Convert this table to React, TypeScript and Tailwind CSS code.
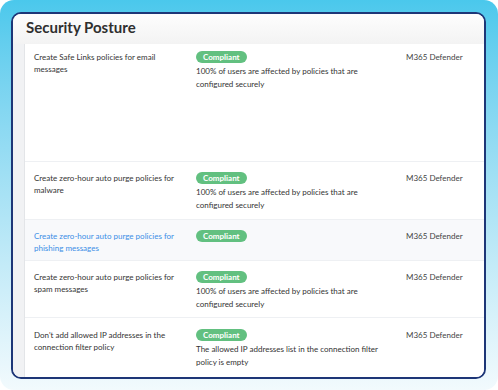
import React from 'react';

interface PostureRow {
  title: string;
  detail?: string;
  source: string;
  height: string;
  pad: string;
  active?: boolean;
}

const rows: PostureRow[] = [
  {
    title: 'Create Safe Links policies for email messages',
    detail: '100% of users are affected by policies that are configured securely',
    source: 'M365 Defender',
    height: 'h-[118px]',
    pad: 'pt-[7px]',
  },
  {
    title: 'Create zero-hour auto purge policies for malware',
    detail: '100% of users are affected by policies that are configured securely',
    source: 'M365 Defender',
    height: 'h-[58px]',
    pad: 'pt-[10px]',
  },
  {
    title: 'Create zero-hour auto purge policies for phishing messages',
    source: 'M365 Defender',
    height: 'h-[41px]',
    pad: 'pt-[10px]',
    active: true,
  },
  {
    title: 'Create zero-hour auto purge policies for spam messages',
    detail: '100% of users are affected by policies that are configured securely',
    source: 'M365 Defender',
    height: 'h-[57px]',
    pad: 'pt-[10px]',
  },
  {
    title: "Don't add allowed IP addresses in the connection filter policy",
    detail: 'The allowed IP addresses list in the connection filter policy is empty',
    source: 'M365 Defender',
    height: 'h-[60px]',
    pad: 'pt-[11px]',
  },
];

export default function App() {
  return (
    <div className="w-[498px] h-[390px] bg-white font-['Lato',sans-serif]">
      <div className="w-full h-full rounded-[14px] bg-gradient-to-b from-[#4ac8ec] via-[#a8e2f5] to-[#f2fafd] pt-[12px] pl-[11px] pr-[12px] pb-[11px]">
        <div className="h-full rounded-[10px] border-2 border-[#1d3677] bg-white overflow-hidden flex flex-col">
          {/* Header */}
          <div className="h-[30px] shrink-0 bg-gradient-to-b from-[#fdfdfd] to-[#f3f3f3] pl-[13px] pb-[3px] flex items-center">
            <h1 className="text-[15px] font-bold text-[#2f2f2f]">Security Posture</h1>
          </div>

          {/* Table */}
          <div className="flex-1 flex overflow-hidden">
            <div className="w-[12px] shrink-0 bg-[#f1f2f4] border-r border-[#e3e5e8]" />
            <div className="flex-1 flex flex-col">
              {rows.map((row) => (
                <div
                  key={row.title}
                  className={`${row.height} ${row.pad} shrink-0 grid grid-cols-[162px_210px_1fr] border-b border-[#eef0f3] pl-[9px] ${row.active ? 'bg-[#f8f9fb]' : 'bg-white'}`}
                >
                  <p className={`text-[8px] leading-[12px] pr-[14px] ${row.active ? 'text-[#3a8ee6]' : 'text-[#333333]'}`}>
                    {row.title}
                  </p>
                  <div className="flex flex-col items-start">
                    <span className="h-[12px] px-[7px] rounded-full bg-[#62c080] text-white text-[8px] font-bold leading-[12px]">
                      Compliant
                    </span>
                    {row.detail && (
                      <p className="mt-[2px] text-[8px] leading-[13px] text-[#333333] pr-[24px]">{row.detail}</p>
                    )}
                  </div>
                  <p className="text-[8px] leading-[12px] text-[#444444]">{row.source}</p>
                </div>
              ))}
            </div>
          </div>
        </div>
      </div>
    </div>
  );
}
